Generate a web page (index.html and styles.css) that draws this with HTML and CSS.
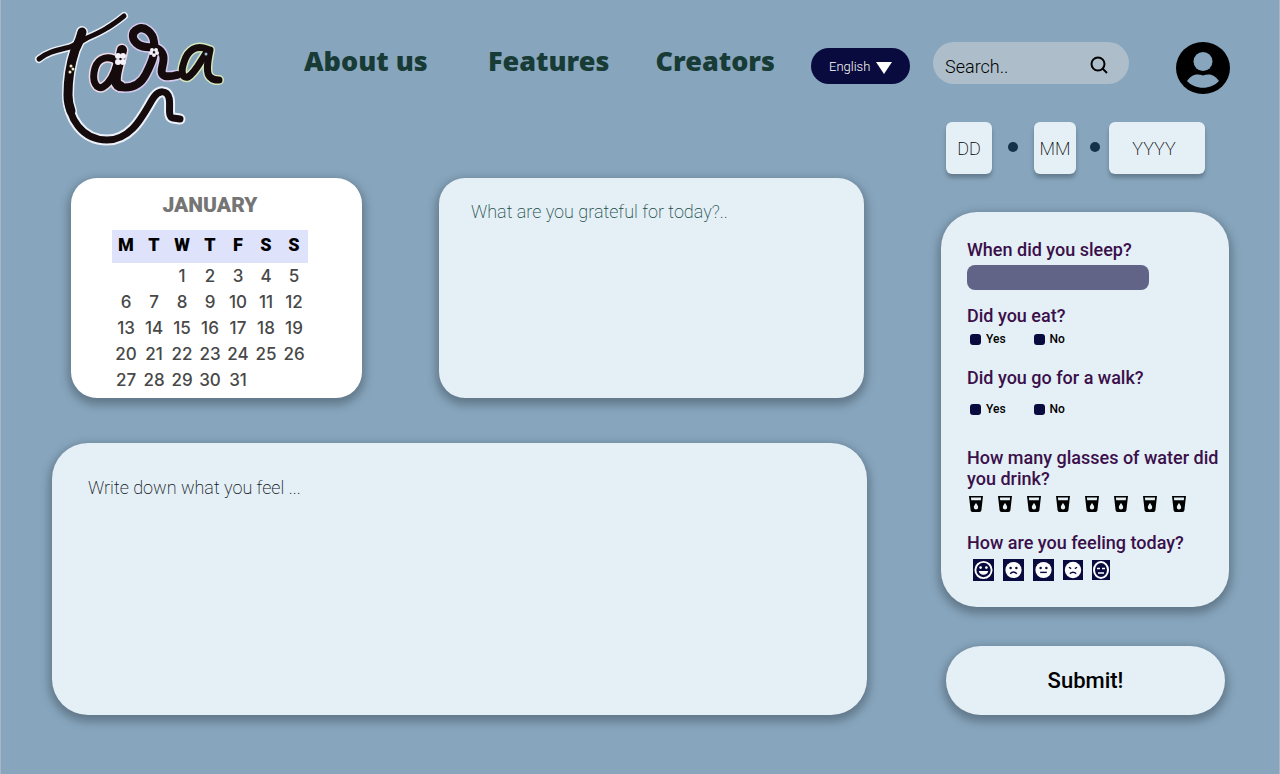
FILE: index.html
```html
<!DOCTYPE html>
<html lang="en">
<head>
<meta charset="utf-8">
<title>Tara</title>
<link rel="stylesheet" href="styles.css">
</head>
<body>
<svg class="sprite" aria-hidden="true">
  <symbol id="glass" viewBox="0 0 14 16">
    <path fill-rule="evenodd" d="M0 0H14L12.400 14.200Q12.200 16 10.500 16H3.500Q1.800 16 1.600 14.200ZM1.900 1.600L2.200 4.200H11.800L12.100 1.600ZM7 7C6 8.500 4.800 9.800 4.800 11.200A2.200 2.200 0 0 0 9.200 11.200C9.200 9.800 8 8.500 7 7Z"/>
  </symbol>
</svg>
<header class="header">
  <a class="logo" href="#" aria-label="Tara">
    <svg viewBox="20 0 220 160" fill="none" stroke-linecap="round" stroke-linejoin="round">
      <defs>
        <path id="swash-bar" d="M39 59C47 52 58 50 70 47C77 44 82 41 87 38C94 35 101 32 107 28C114 24 119 20 124 16"/>
        <path id="swash-top" d="M82 32C80 41 77 46 75 50C70 65 68 80 68 95C68 101 69 106 71 111"/>
        <path id="swash-tail" d="M68 95C68 118 82 140 107 140C134 140 145 110 154 97C159 90 167 90 169 98C171 105 167 117 173 118L180 119"/>
        <path id="bowl-left" d="M118 62C109 54 98 58 95 68C91 82 97 90 103 87C110 83 114 75 117 64"/>
        <path id="stem-left" d="M122 50C120 60 117 68 116 76C115 83 117 85 120 86"/>
        <path id="loop" d="M120 87C133 89 141 84 146 74C151 64 156 54 154 42C153 32 144 26 138 29C131 32 131 40 139 45C147 50 158 43 163 55C166 63 157 73 165 76Q170 77 177 75"/>
        <path id="bowl-right" d="M207 49C197 45 188 49 184 62C180 74 183 78 188 77C196 72 201 60 207 52"/>
        <path id="stem-right" d="M210 50C207 64 206 73 210 77C213 80 215 80 219 80"/>
      </defs>
      <g stroke="#edf2fa">
        <use href="#swash-bar" stroke-width="8"/><use href="#swash-top" stroke-width="12"/><use href="#swash-tail" stroke-width="11"/>
      </g>
      <g stroke="#f0dbe8"><use href="#bowl-left" stroke-width="10"/><use href="#stem-left" stroke-width="13"/></g>
      <use href="#loop" stroke="#d5c9ee" stroke-width="11"/>
      <g stroke="#d6e9bd"><use href="#bowl-right" stroke-width="10"/><use href="#stem-right" stroke-width="10"/></g>
      <g stroke="#150b0d">
        <use href="#swash-bar" stroke-width="5"/><use href="#swash-top" stroke-width="9"/><use href="#swash-tail" stroke-width="7"/>
        <use href="#bowl-left" stroke-width="7"/><use href="#stem-left" stroke-width="10"/>
        <use href="#loop" stroke-width="8"/>
        <use href="#bowl-right" stroke-width="7"/><use href="#stem-right" stroke-width="7"/>
      </g>
      <circle cx="206" cy="54" r="1.500" fill="#9fb9d4"/>
      <g fill="#f4f1fb">
        <circle cx="118" cy="56" r="3"/><circle cx="123" cy="56" r="3"/><circle cx="118" cy="62" r="3"/><circle cx="123" cy="62" r="3"/>
        <circle cx="152" cy="50" r="2"/><circle cx="156" cy="50" r="2"/><circle cx="151" cy="53" r="2"/><circle cx="157" cy="53" r="2"/><circle cx="154" cy="55" r="2"/>
      </g>
      <g fill="#150b0d"><circle cx="120.500" cy="59" r="1"/><circle cx="154" cy="52.500" r="1"/></g>
      <g fill="#f1ecc4"><circle cx="71" cy="66" r="1.500"/><circle cx="73" cy="69" r="1.500"/><circle cx="70" cy="72" r="1.500"/></g>
    </svg>
  </a>
  <nav class="nav">
    <a class="about" href="#">About us</a>
    <a href="#">Features</a>
    <a href="#">Creators</a>
  </nav>
  <div class="language">
    <select aria-label="Language"><option>English</option></select>
    <svg viewBox="0 0 16 12" aria-hidden="true"><path d="M0 0H16L8 12Z"/></svg>
  </div>
  <form class="search">
    <input type="text" placeholder="Search.." aria-label="Search">
    <button type="button" aria-label="Search">
      <svg viewBox="0 0 18 18" fill="none" stroke="#000" stroke-width="2"><circle cx="8" cy="8" r="6.500"/><path d="M12.500 12.500L17 17"/></svg>
    </button>
  </form>
  <button class="avatar" type="button" aria-label="Profile">
    <svg viewBox="0 0 54 52"><ellipse cx="27" cy="26" rx="27" ry="26"/><circle class="cut" cx="27" cy="19.500" r="9.500"/><path class="cut" d="M11 39C17 31 22 32 27 33.500C32 32 37 31 43 39C35 48 19 48 11 39Z"/></svg>
  </button>
</header>
<main class="main">
  <section class="journal">
    <div class="top-row">
      <div class="card calendar">
        <table>
          <caption>JANUARY</caption>
          <thead><tr><th>M</th><th>T</th><th>W</th><th>T</th><th>F</th><th>S</th><th>S</th></tr></thead>
          <tbody>
            <tr><td></td><td></td><td>1</td><td>2</td><td>3</td><td>4</td><td>5</td></tr>
            <tr><td>6</td><td>7</td><td>8</td><td>9</td><td>10</td><td>11</td><td>12</td></tr>
            <tr><td>13</td><td>14</td><td>15</td><td>16</td><td>17</td><td>18</td><td>19</td></tr>
            <tr><td>20</td><td>21</td><td>22</td><td>23</td><td>24</td><td>25</td><td>26</td></tr>
            <tr><td>27</td><td>28</td><td>29</td><td>30</td><td>31</td><td></td><td></td></tr>
          </tbody>
        </table>
      </div>
      <textarea class="card grateful" placeholder="What are you grateful for today?.." aria-label="What are you grateful for today?"></textarea>
    </div>
    <textarea class="card feelings" placeholder="Write down what you feel ..." aria-label="Write down what you feel"></textarea>
  </section>
  <form class="side">
    <div class="date">
      <input class="day" type="text" placeholder="DD" aria-label="Day">
      <span class="dot"></span>
      <input class="month" type="text" placeholder="MM" aria-label="Month">
      <span class="dot"></span>
      <input class="year" type="text" placeholder="YYYY" aria-label="Year">
    </div>
    <div class="card panel">
      <label class="question" for="sleep">When did you sleep?</label>
      <input class="sleep" id="sleep" type="text">
      <fieldset class="eat">
        <legend class="question">Did you eat?</legend>
        <div class="options">
          <label><input type="radio" name="eat">Yes</label>
          <label><input type="radio" name="eat">No</label>
        </div>
      </fieldset>
      <fieldset class="walk">
        <legend class="question">Did you go for a walk?</legend>
        <div class="options">
          <label><input type="radio" name="walk">Yes</label>
          <label><input type="radio" name="walk">No</label>
        </div>
      </fieldset>
      <fieldset class="water">
        <legend class="question">How many glasses of water did you drink?</legend>
        <div class="glasses">
          <button type="button" aria-label="1 glass"><svg><use href="#glass"/></svg></button>
          <button type="button" aria-label="2 glasses"><svg><use href="#glass"/></svg></button>
          <button type="button" aria-label="3 glasses"><svg><use href="#glass"/></svg></button>
          <button type="button" aria-label="4 glasses"><svg><use href="#glass"/></svg></button>
          <button type="button" aria-label="5 glasses"><svg><use href="#glass"/></svg></button>
          <button type="button" aria-label="6 glasses"><svg><use href="#glass"/></svg></button>
          <button type="button" aria-label="7 glasses"><svg><use href="#glass"/></svg></button>
          <button type="button" aria-label="8 glasses"><svg><use href="#glass"/></svg></button>
        </div>
      </fieldset>
      <fieldset class="mood">
        <legend class="question">How are you feeling today?</legend>
        <div class="faces">
          <button type="button" aria-label="Great"><svg viewBox="0 0 22 22"><circle class="ring" cx="11" cy="11" r="8.500"/><circle class="w" cx="8" cy="8.500" r="1.400"/><circle class="w" cx="14" cy="8.500" r="1.400"/><path class="w" d="M6 12H16Q15 16 11 16T6 12Z"/></svg></button>
          <button type="button" aria-label="Sad"><svg viewBox="0 0 22 22"><circle class="w" cx="11" cy="11" r="8.500"/><circle cx="8" cy="9" r="1.300"/><circle cx="14" cy="9" r="1.300"/><path class="line" d="M7.500 15Q11 11 14.500 15"/></svg></button>
          <button type="button" aria-label="Neutral"><svg viewBox="0 0 22 22"><circle class="w" cx="11" cy="11" r="8.500"/><circle cx="8" cy="9" r="1.300"/><circle cx="14" cy="9" r="1.300"/><path class="line" d="M7.500 13.500H14.500"/></svg></button>
          <button class="medium" type="button" aria-label="Angry"><svg viewBox="0 0 22 22"><circle class="w" cx="11" cy="11" r="9"/><path class="line" d="M6.500 8L9 9.500M15.500 8L13 9.500M7.500 15Q11 12 14.500 15"/></svg></button>
          <button class="small" type="button" aria-label="Calm"><svg viewBox="0 0 18 20"><ellipse class="ring" cx="9" cy="10" rx="7" ry="8"/><path class="stroke" d="M5 8.500H8M10 8.500H13M6 13H12"/></svg></button>
        </div>
      </fieldset>
    </div>
    <button class="card submit" type="submit">Submit!</button>
  </form>
</main>
</body>
</html>
```
FILE: styles.css
```css
* { box-sizing: border-box; }
body { margin: 0; min-height: 100vh; border: solid #a9b4c6; border-width: 0 1px; background: #87a6be; font-family: Roboto, "Liberation Sans", sans-serif; color: #000; }
button, input, select, textarea { font: inherit; color: inherit; border: 0; padding: 0; margin: 0; background: none; }
button { cursor: pointer; }
svg { display: block; }
fieldset { border: 0; margin: 0; padding: 0; min-width: 0; }
legend { padding: 0; }
.sprite { position: absolute; width: 0; height: 0; }

.header { display: flex; align-items: flex-start; height: 122px; padding: 0 49px 0 19px; }
.logo { flex: none; width: 220px; height: 160px; }
.nav { display: flex; flex: 1; justify-content: space-between; padding: 42px 36px 0 64px; font: 900 27px/38px "Noto Sans", sans-serif; }
.nav a { color: #183b36; text-decoration: none; white-space: nowrap; }
.nav .about { padding-right: 14px; }
.language { position: relative; margin-top: 48px; }
.language select { appearance: none; display: block; width: 99px; height: 36px; padding-left: 18px; border-radius: 18px; background: #090a3d; color: #fff; font-size: 13px; font-weight: 300; }
.language svg { position: absolute; right: 18px; top: 14px; width: 16px; height: 12px; fill: #fff; pointer-events: none; }
.search { display: flex; align-items: center; width: 196px; height: 42px; margin: 42px 47px 0 23px; padding: 0 21px 0 12px; border-radius: 21px; background: #adbeca; }
.search input { flex: 1; min-width: 0; height: 42px; padding-top: 6px; font-size: 18px; font-weight: 300; }
.search svg { width: 18px; height: 18px; margin-top: 3px; }
.avatar { flex: none; margin-top: 42px; }
.avatar svg { width: 54px; height: 52px; }
.cut { fill: #87a6be; }
::placeholder { color: inherit; opacity: 1; }

.main { display: grid; grid-template-columns: 1fr 288px; gap: 74px; padding: 0 50px 58px 51px; }
.card { background: #e4eff6; box-shadow: 0 4px 10px 3px rgba(0, 0, 0, .28); }
.journal { display: flex; flex-direction: column; gap: 45px; padding-top: 56px; }
.top-row { display: grid; grid-template-columns: 291fr 425fr; gap: 77px; padding: 0 3px 0 19px; }
.calendar { border-radius: 26px; background: #fff; padding: 13px 13px 5px 0; }
.calendar table { margin: 0 auto; border-collapse: collapse; table-layout: fixed; width: 196px; font: 500 17px/26px Inter, sans-serif; color: #484848; text-align: center; }
.calendar caption { height: 39px; font: 900 21px/28px Roboto, sans-serif; color: #757575; }
.calendar th { height: 33px; padding: 0 0 4px; background: #dfe2fb; font: 900 18px/26px Roboto, sans-serif; color: #000; }
.calendar td { height: 26px; padding: 0; }
textarea { display: block; resize: none; outline: 0; font-size: 18px; font-weight: 200; line-height: 24px; }
.grateful { width: 100%; min-width: 0; padding: 22px 32px; border-radius: 26px; color: #204c48; }
.feelings { width: 100%; height: 272px; padding: 33px 36px; border-radius: 36px; color: #0d1418; }

.date { display: flex; align-items: center; padding: 0 24px 0 5px; }
.date input { height: 52px; border-radius: 6px; background: #e4eff6; box-shadow: 0 4px 4px rgba(0, 0, 0, .25); text-align: center; font-size: 18px; font-weight: 200; }
.date .day { width: 46px; }
.date .month { width: 42px; }
.date .year { flex: 1; min-width: 0; padding-right: 6px; }
.dot { flex: none; width: 10px; height: 10px; margin: 0 16px 2px; border-radius: 50%; background: #12334a; }
.month + .dot { margin: 0 9px 2px 14px; }
.panel { margin-top: 38px; padding: 27px 10px 26px 26px; border-radius: 36px; }
.question { display: block; font-size: 18px; font-weight: 500; line-height: 21px; color: #3a0f4a; }
.sleep { display: block; width: 182px; height: 25px; margin: 5px 0 15px; border-radius: 8px; background: #616487; }
.options { display: flex; gap: 28px; font-size: 12px; font-weight: 500; line-height: 16px; }
.options label { display: flex; align-items: center; gap: 5px; }
.options input { appearance: none; width: 11px; height: 11px; border-radius: 3px; background: #090a3d; }
.eat .options { padding: 5px 0 20px 3px; }
.walk .options { padding: 13px 0 30px 3px; }
.glasses { display: flex; gap: 15px; padding: 7px 0 20px 2px; }
.glasses svg { width: 14px; height: 16px; }
.faces { display: flex; align-items: center; gap: 9px; padding: 6px 0 0 6px; }
.faces button { background: #090a3d; }
.faces svg { width: 21px; height: 22px; fill: #090a3d; }
.faces .medium svg { width: 20px; height: 20px; }
.faces .small svg { width: 18px; height: 20px; }
.faces .w { fill: #fff; }
.faces .ring { fill: none; stroke: #fff; stroke-width: 2px; }
.faces .line { fill: none; stroke: #090a3d; stroke-width: 1.5px; }
.faces .stroke { fill: none; stroke: #fff; stroke-width: 1.5px; }
.submit { display: block; width: calc(100% - 9px); height: 69px; margin: 39px 4px 0 5px; border-radius: 35px; font-size: 22px; font-weight: 500; }
```
